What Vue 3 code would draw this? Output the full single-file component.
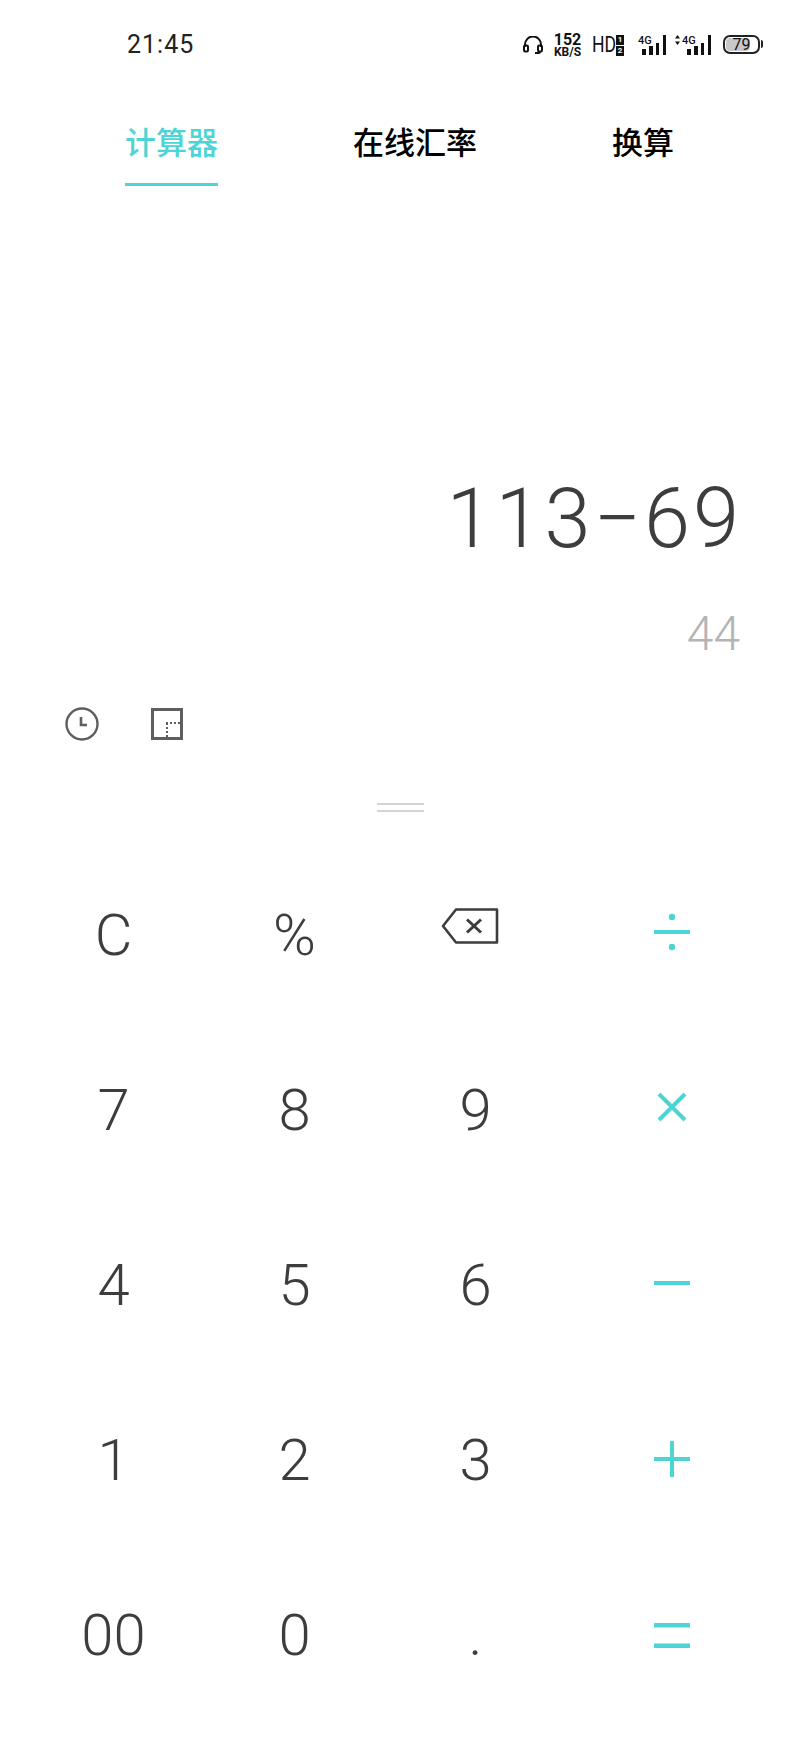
<script setup>
const tabs = ['计算器', '在线汇率', '换算']
const rows = [
  ['C', '%', 'back', 'div'],
  ['7', '8', '9', 'mul'],
  ['4', '5', '6', 'sub'],
  ['1', '2', '3', 'add'],
  ['00', '0', '.', 'eq']
]
</script>

<template>
  <div class="page">
    <div class="status">
      <span class="time">21:45</span>
      <div class="icons">
        <svg class="headset" width="20" height="18" viewBox="0 0 20 18" fill="none" stroke="#111" stroke-width="2">
          <path d="M2 11V8.5a8 8 0 0 1 16 0V11" />
          <rect x="1" y="9.5" width="4" height="6" rx="1.2" />
          <rect x="15" y="9.5" width="4" height="6" rx="1.2" />
          <path d="M17 15.5c0 1-1 1.6-2 1.6h-3" />
        </svg>
        <div class="speed"><b>152</b><b class="unit">KB/S</b></div>
        <span class="hd">HD</span>
        <div class="sims"><i>1</i><i>2</i></div>
        <svg class="signal" width="29" height="22" viewBox="0 0 29 22">
          <text x="0" y="10" class="g">4G</text>
          <rect x="4" y="15" width="4" height="6" />
          <rect x="11" y="12" width="4" height="9" />
          <rect x="18" y="9" width="3" height="12" />
          <rect x="25" y="1" width="3" height="20" />
        </svg>
        <svg class="signal second" width="38" height="22" viewBox="0 0 38 22">
          <path d="M1 4.5l2.5-3.5 2.5 3.5zM1 7.5l2.5 3.5 2.5-3.5z" fill="#111" />
          <text x="8" y="10" class="g">4G</text>
          <rect x="13" y="15" width="4" height="6" />
          <rect x="20" y="12" width="4" height="9" />
          <rect x="27" y="9" width="3" height="12" />
          <rect x="34" y="1" width="3" height="20" />
        </svg>
        <div class="battery"><span class="level"></span><span class="pct">79</span></div>
      </div>
    </div>

    <div class="tabs">
      <div v-for="(t, i) in tabs" :key="t" class="tab" :class="{ on: i === 0 }">{{ t }}</div>
    </div>

    <div class="screen">
      <div class="expr">113−69</div>
      <div class="result">44</div>
    </div>

    <div class="tools">
      <svg width="34" height="34" viewBox="0 0 34 34" fill="none" stroke="#5f5f5f" stroke-width="2.4">
        <circle cx="17" cy="17" r="15.5" />
        <path d="M16 10v8h6" stroke-width="2.6" />
      </svg>
      <svg width="32" height="32" viewBox="0 0 32 32" fill="none" stroke="#5f5f5f">
        <rect x="1.5" y="1.5" width="29" height="29" stroke-width="3" />
        <path d="M15 15h15M16 15v16" stroke-width="2" stroke-dasharray="2 2" />
      </svg>
    </div>

    <div class="handle"><span></span><span></span></div>

    <div class="keys">
      <template v-for="row in rows" :key="row[0]">
        <div v-for="k in row" :key="k" class="key">
          <svg v-if="k === 'back'" class="back" width="58" height="36" viewBox="0 0 58 36" fill="none" stroke="#3d3d3d">
            <path d="M15 1.5h41v33H15L2 18z" stroke-width="2.6" stroke-linejoin="round" />
            <path d="M26 11.5l14 13M40 11.5l-14 13" stroke-width="3" />
          </svg>
          <svg v-else-if="k === 'div'" class="op div" width="36" height="42" viewBox="0 0 36 42" fill="#4dd5d5">
            <circle cx="18" cy="6" r="3.2" />
            <rect y="19" width="36" height="4" />
            <circle cx="18" cy="36" r="3.2" />
          </svg>
          <svg v-else-if="k === 'mul'" class="op mul" width="30" height="30" viewBox="0 0 30 30" stroke="#4dd5d5" stroke-width="4">
            <path d="M2 2l26 26M28 2L2 28" />
          </svg>
          <svg v-else-if="k === 'sub'" class="op sub" width="36" height="4" viewBox="0 0 36 4" fill="#4dd5d5">
            <rect width="36" height="4" />
          </svg>
          <svg v-else-if="k === 'add'" class="op add" width="36" height="36" viewBox="0 0 36 36" fill="#4dd5d5">
            <rect y="16" width="36" height="4" />
            <rect x="16" width="4" height="36" />
          </svg>
          <svg v-else-if="k === 'eq'" class="op eq" width="36" height="25" viewBox="0 0 36 25" fill="#4dd5d5">
            <rect width="36" height="4.5" />
            <rect y="20.5" width="36" height="4.5" />
          </svg>
          <span v-else>{{ k }}</span>
        </div>
      </template>
    </div>
  </div>
</template>

<style>
html, body { background: #fff; }
</style>

<style scoped>
.page {
  width: 800px;
  height: 1760px;
  overflow: hidden;
  background: #fff;
  font-family: Roboto, "Noto Sans CJK SC", sans-serif;
  color: #3d3d3d;
}
.status {
  height: 88px;
  padding: 2px 40px 0 127px;
  box-sizing: border-box;
  display: flex;
  align-items: center;
  justify-content: space-between;
}
.time {
  font: 400 25px/30px Roboto, sans-serif;
  letter-spacing: 1px;
  color: #222;
}
.icons {
  display: flex;
  align-items: center;
  color: #111;
}
.headset { margin-right: 9px; }
.speed {
  display: flex;
  flex-direction: column;
  align-items: center;
  width: 31px;
  margin-right: 9px;
  font-family: Roboto, sans-serif;
  line-height: 12px;
}
.speed b { font-size: 16px; font-weight: 700; line-height: 13px; }
.speed .unit { font-size: 12px; line-height: 12px; }
.hd {
  display: inline-block;
  width: 22px;
  font: 400 22px/24px Roboto, sans-serif;
  transform: scaleX(0.8);
  transform-origin: left center;
  margin-right: 2px;
}
.sims {
  display: flex;
  flex-direction: column;
  gap: 1px;
  margin-right: 14px;
}
.sims i {
  display: block;
  width: 8px;
  height: 10px;
  background: #111;
  color: #fff;
  font: 700 8px/10px Roboto, sans-serif;
  text-align: center;
}
.signal { fill: #111; margin-right: 7px; }
.signal.second { margin-right: 11px; }
.g { font: 500 11px Roboto, sans-serif; fill: #111; }
.battery {
  position: relative;
  width: 37px;
  height: 19px;
  margin-bottom: 2px;
  border: 2px solid #222;
  border-radius: 7px;
  box-sizing: border-box;
}
.battery::after {
  content: "";
  position: absolute;
  right: -5px;
  top: 3px;
  width: 2px;
  height: 8px;
  background: #222;
  border-radius: 0 2px 2px 0;
}
.level {
  position: absolute;
  left: 1px;
  top: 1px;
  bottom: 1px;
  width: 24px;
  background: #c8c8c8;
  border-radius: 4px;
}
.pct {
  position: absolute;
  inset: 0;
  text-align: center;
  font: 400 16px/15px Roboto, sans-serif;
  color: #111;
}
.tabs {
  display: flex;
  gap: 135px;
  padding-left: 125px;
  margin-top: 35px;
}
.tab {
  height: 60px;
  line-height: 41px;
  font-size: 31px;
  font-weight: 500;
  color: #000;
}
.tab.on {
  color: #4dd5d5;
  border-bottom: 3px solid #4dd5d5;
}
.screen {
  margin-top: 283px;
  padding-right: 58px;
  text-align: right;
}
.expr {
  font-size: 83px;
  line-height: 100px;
  font-weight: 300;
  letter-spacing: 3px;
}
.result {
  margin-top: 35px;
  font-size: 48px;
  line-height: 60px;
  font-weight: 300;
  color: #b4b4b4;
  padding-right: 2px;
}
.tools {
  display: flex;
  align-items: center;
  gap: 52px;
  padding-left: 65px;
  margin-top: 43px;
}
.handle {
  display: flex;
  flex-direction: column;
  align-items: center;
  gap: 5px;
  margin-top: 62px;
}
.handle span {
  width: 47px;
  height: 2px;
  background: #d4d4d4;
}
.keys {
  display: grid;
  grid-template-columns: 181px 181px 181px 211px;
  grid-auto-rows: 175px;
  padding-left: 23px;
  margin-top: 35px;
}
.key {
  display: flex;
  align-items: center;
  justify-content: center;
  font-size: 58px;
  font-weight: 300;
  line-height: 1;
}
.back { margin: 0 11px 18px 0; }
.div, .mul { margin-bottom: 6px; }
.sub { margin-bottom: 4px; }
.add { margin-bottom: 2px; }
.eq { margin-top: 2px; }
</style>
